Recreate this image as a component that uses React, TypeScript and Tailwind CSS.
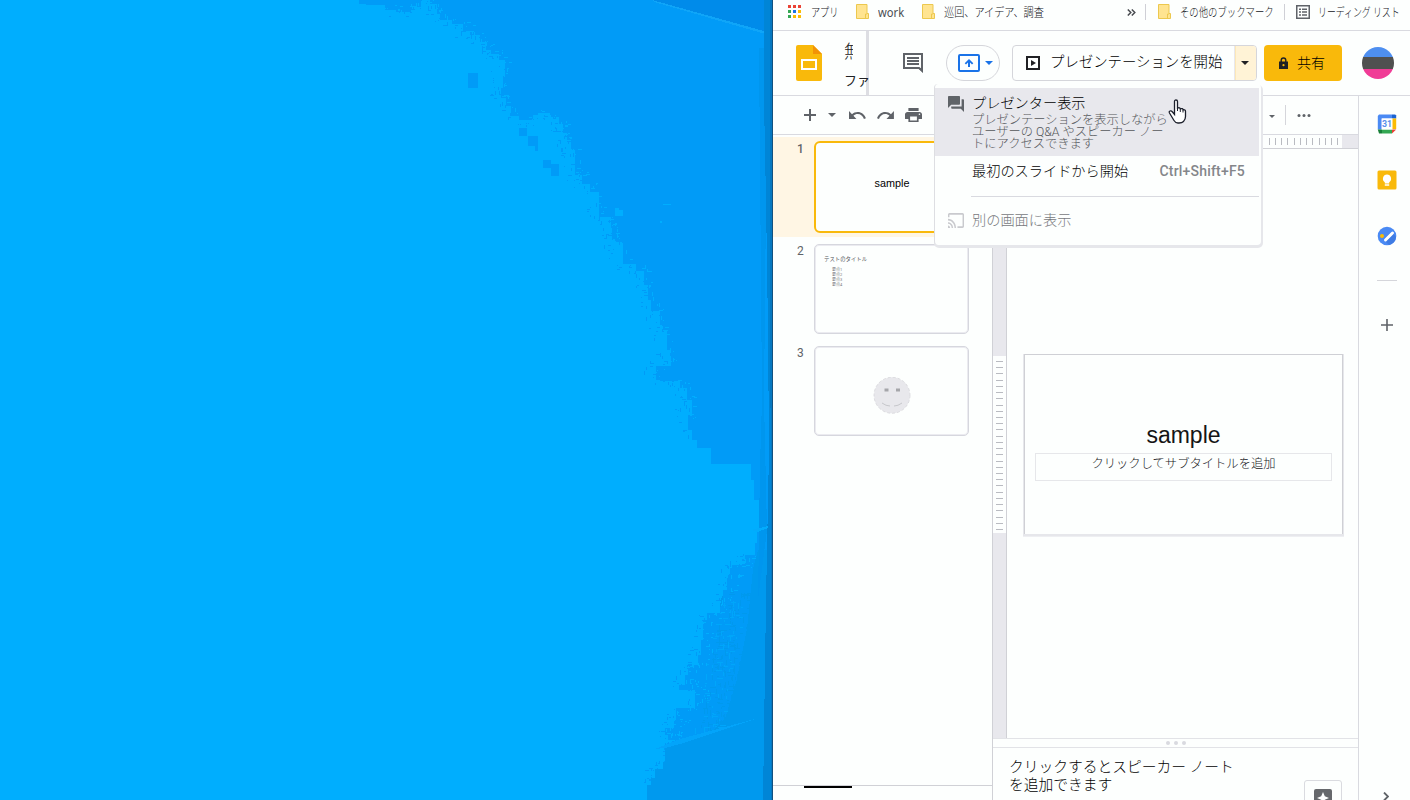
import React from "react";

const JP = "font-['Roboto','Noto_Sans_CJK_JP',sans-serif]";

type TProps = { w: string; s: string; children: React.ReactNode; className?: string };

/** Single-line label inside a box of known width. */
function Label({ w, s, children, className = "" }: TProps) {
  return (
    <span className={`block shrink-0 whitespace-nowrap ${w} ${className}`}>
      <span className={`inline-block origin-left ${s}`}>{children}</span>
    </span>
  );
}

/** Edge of the bright glow on the wallpaper, top to bottom. */
const EDGE: number[][] = [
  [359, 0], [366, 4], [385, 5], [396, 10], [411, 12], [412, 4], [421, 7], [430, 0], [437, 4], [440, 14], [452, 20],
  [463, 24], [470, 31], [480, 35], [486, 42], [491, 50], [499, 54], [505, 60], [503, 76], [501, 88], [506, 98],
  [511, 106], [519, 116], [532, 120], [538, 115], [550, 113], [559, 117], [563, 124], [567, 133], [571, 142],
  [575, 150], [575, 166], [582, 175], [590, 184], [599, 192], [599, 210], [611, 217], [612, 228], [616, 239],
  [623, 242], [623, 264], [636, 264], [644, 271], [648, 285], [651, 300], [660, 311], [662, 325], [667, 330],
  [671, 350], [671, 364], [656, 366], [660, 380], [680, 381], [687, 388], [692, 400], [688, 415], [692, 430],
  [697, 440], [711, 448], [711, 463], [751, 464], [754, 480], [759, 500], [762, 515], [769, 528], [757, 532],
  [755, 543], [745, 555], [742, 563], [730, 565], [727, 575], [723, 590], [720, 605], [707, 613], [703, 620],
  [701, 640], [698, 655], [688, 665], [685, 675], [679, 685], [695, 690], [695, 706], [676, 708], [674, 720],
  [665, 728], [668, 735], [672, 740], [667, 746], [665, 760], [663, 767], [655, 769], [651, 778], [647, 785], [647, 800],
];

function random(seed: number) {
  let a = seed;
  return () => {
    a = (a * 1664525 + 1013904223) % 4294967296;
    return a / 4294967296;
  };
}

const stepped = EDGE.map(([x, y], i) => (i === 0 ? `M${x} ${y}` : `V${y}H${x}`)).join("");

function speckle(from: number, to: number, seed: number, inner: number, outer: number, count: number) {
  const r = random(seed);
  let d = "";
  for (let i = from; i < to; i++) {
    const [x0, y0] = EDGE[i];
    const [x1, y1] = EDGE[i + 1];
    for (let k = 0; k < count; k++) {
      const t = r();
      const x = Math.round(x0 + (x1 - x0) * t - inner + r() * (inner + outer));
      const y = Math.round(y0 + (y1 - y0) * t + (r() - 0.5) * 12);
      const tall = r() > 0.5;
      const n = 1 + Math.floor(r() * 4);
      d += `M${x} ${y}h${tall ? 1 : n}v${tall ? n : 1}h${tall ? -1 : -n}z`;
    }
  }
  return d;
}

function scatter(seed: number, count: number, x: number, y: number, w: number, h: number, slant: number) {
  const r = random(seed);
  let d = "";
  for (let i = 0; i < count; i++) {
    const v = r();
    const px = Math.round(x + r() * w - v * slant);
    const py = Math.round(y + v * h);
    const n = 2 + Math.floor(r() * 5);
    d += r() > 0.5 ? `M${px} ${py}h1v${n}h-1z` : `M${px} ${py}h${n}v1h${-n}z`;
  }
  return d;
}

const darkSpecks = speckle(3, 56, 7, 15, 1, 6) + speckle(67, 92, 19, 8, 2, 5);
const lightSpecks = speckle(1, 56, 31, 2, 5, 4) + speckle(67, 92, 43, 2, 14, 8);
const glowScatter = scatter(5, 90, 718, 600, 28, 130, 24);
const deepScatter = scatter(11, 220, 722, 590, 38, 140, 24);

function Desktop() {
  return (
    <svg className="block h-[800px] w-[772px] shrink-0" viewBox="0 0 772 800" shapeRendering="crispEdges">
      <path d="M0 0H772V800H0Z" fill="#00aefe" />
      <path d={`${stepped}H772V0Z`} fill="#019bf7" />
      <path d={darkSpecks} fill="#019bf7" />
      <path d={lightSpecks} fill="#00aefe" />
      <path d="M468 73h10v15h-10zM519 128h8v8h-8zM528 136h10v15h-3v-5h-7zM543 160h8v4h8v12h-8v-8h-8z" fill="#019bf7" />
      <path d="M615 208h4v2h4v6h-8zM663 204h8v1h-8zM660 221h2v2h-2z" fill="#00aefe" />
      <path d="M758 550H772V800H647V785h4v-7h4v-9h8v-7h2v-15l45-14 15-14 12-40 10-50 6-60Z" fill="#0099ee" />
      <path d={deepScatter} fill="#0099ee" />
      <path d={glowScatter} fill="#00a6fa" />
      <path d="M655 749L680 739L710 731L755 719L710 734L680 744L665 748Z" fill="#03a4fa" />
      <path d="M652 0L768 33V0Z" fill="#008bea" />
      <path d="M652 0L771 33V35L762 33L654 2Z" fill="#0fa5f8" />
      <path d="M759 48H764L766 200L764 400L767 530L758 600L760 465L762 400Z" fill="#0096ee" />
      <path d="M764 0H772V800H763L766 600L769 450L768 330L766 200L764 100Z" fill="#0085d6" />
      <path d="M770 0H772V800H771Z" fill="#0678c0" />
      <path d="M751 530l17-4v2l-11 4z" fill="#03abfc" />
    </svg>
  );
}

function Folder() {
  return (
    <svg className="block h-[15px] w-[13px] shrink-0" viewBox="0 0 13 15">
      <path d="M.5.5h10.500v9h1.500v5H.5z" fill="#ffe490" stroke="#ecc84e" />
      <path d="M9.500 14V10h1.500" fill="none" stroke="#ecc84e" />
    </svg>
  );
}

function Bookmarks() {
  const colors = ["#ea4335", "#ea4335", "#ea4335", "#34a853", "#1a73e8", "#fbbc04", "#34a853", "#fbbc04", "#fbbc04"];
  return (
    <div className="flex h-[31px] items-start border-b border-[#d9dae0] pl-[15px] pt-[4px] font-['Noto_Sans','Noto_Sans_CJK_JP',sans-serif] text-[12px] font-light leading-[17px] text-[#111318]">
      <svg className="mt-[1px] h-[13px] w-[13px] shrink-0" viewBox="0 0 13 13">
        {colors.map((c, i) => (
          <rect key={i} x={(i % 3) * 5} y={Math.floor(i / 3) * 5} width="3" height="3" fill={c} />
        ))}
      </svg>
      <Label w="ml-[10px] w-[45px]" s="scale-x-[0.76]">アプリ</Label>
      <Folder />
      <Label w="ml-[9px] w-[44px]" s="scale-x-[0.93]"><span className="font-normal text-[#4a4d52]">work</span></Label>
      <Folder />
      <Label w="ml-[9px] w-[183px]" s="scale-x-[0.845]">巡回、アイデア、調査</Label>
      <svg className="mt-[5px] h-[7px] w-[9px] shrink-0" viewBox="0 0 9 7" fill="none" stroke="#4a4d52" strokeWidth="1.500">
        <path d="M.8.500l3 3-3 3M4.800.500l3 3-3 3" />
      </svg>
      <div className="ml-[9px] h-[16px] w-px bg-[#cfd0d6]" />
      <div className="ml-[12px]"><Folder /></div>
      <Label w="ml-[9px] w-[104px]" s="scale-x-[0.78]">その他のブックマーク</Label>
      <div className="h-[16px] w-px bg-[#cfd0d6]" />
      <svg className="ml-[11px] mt-px h-[14px] w-[14px] shrink-0" viewBox="0 0 14 14">
        <path d="M.75.750h12.500v12.500H.75z" fill="none" stroke="#5f6368" strokeWidth="1.500" />
        <path d="M3 3.500h2v1.500H3zM6 3.500h5v1.500H6zM3 6.300h2v1.500H3zM6 6.300h5v1.500H6zM3 9.200h2v1.500H3zM6 9.200h5v1.500H6z" fill="#5f6368" />
      </svg>
      <Label w="ml-[8px] w-[84px]" s="scale-x-[0.74]">リーディング リスト</Label>
    </div>
  );
}

function Header() {
  return (
    <div className="flex h-[65px] items-start border-b border-[#d9dae0]">
      <svg className="ml-[23px] mt-[14px] h-[36px] w-[26px] shrink-0" viewBox="0 0 26 36">
        <path d="M2 0h15l9 9v25a2 2 0 0 1-2 2H2a2 2 0 0 1-2-2V2a2 2 0 0 1 2-2z" fill="#f9b90b" />
        <path d="M17 0l9 9h-9z" fill="#f29307" />
        <path d="M6 15h14v9H6z" fill="none" stroke="#fff" strokeWidth="2" />
      </svg>
      <div className="ml-[22px] flex h-[64px] w-[25px] flex-col border-r-[3px] border-[#dddee3] text-[#202124]">
        <div className="mt-[11px] h-[20px] w-[9px] overflow-hidden whitespace-nowrap text-[18px] font-light leading-[20px] text-[#202124]">無</div>
        <div className="mt-[10px] whitespace-nowrap text-[13px] leading-[18px]">ファ</div>
      </div>
      <svg className="ml-[34px] mt-[22px] h-[20px] w-[20px] shrink-0" viewBox="0 0 20 20">
        <path d="M1 1h18v16.500L16 15H1z" fill="none" stroke="#5f6368" strokeWidth="2" />
        <path d="M15 15h5v5z" fill="#5f6368" />
        <path d="M4 4h12v2H4zM4 7h12v2H4zM4 10h12v2H4z" fill="#5f6368" />
      </svg>
      <div className="ml-[23px] mt-[14px] flex h-[36px] w-[54px] shrink-0 items-center rounded-full border border-[#d5d6db] pl-[11px]">
        <svg className="h-[18px] w-[22px]" viewBox="0 0 22 18">
          <rect x="1" y="1" width="20" height="16" rx="1" fill="none" stroke="#1a73e8" strokeWidth="2" />
          <path d="M10 13h2V8.500l2 2 1.300-1.300L11 5 6.700 9.200 8 10.500l2-2z" fill="#1a73e8" />
        </svg>
        <svg className="ml-[5px] h-[4px] w-[8px]" viewBox="0 0 8 4"><path d="M0 0h8L4 4z" fill="#1a73e8" /></svg>
      </div>
      <div className="ml-[12px] mt-[14px] flex h-[36px] w-[245px] shrink-0 overflow-hidden rounded-[4px] border border-[#d5d6db]">
        <div className="flex w-[222px] shrink-0 items-center border-r border-[#e8e8ec] pl-[13px]">
          <svg className="h-[14px] w-[14px] shrink-0" viewBox="0 0 14 14">
            <path d="M1 1h12v12H1z" fill="none" stroke="#202124" strokeWidth="2" />
            <path d="M5 4l5 3-5 3z" fill="#202124" />
          </svg>
          <span className="ml-[10px] whitespace-nowrap text-[14.400px] font-light leading-[20px] text-black">プレゼンテーションを開始</span>
        </div>
        <div className="flex w-[21px] shrink-0 items-center border-l border-[#fce8b8] bg-[#fff3d6] pl-[5px]">
          <svg className="h-[4px] w-[8px]" viewBox="0 0 8 4"><path d="M0 0h8L4 4z" fill="#202124" /></svg>
        </div>
      </div>
      <div className="ml-[7px] mt-[14px] flex h-[36px] w-[78px] shrink-0 items-center rounded-[4px] bg-[#f9b90b] pl-[15px]">
        <svg className="h-[12px] w-[9px]" viewBox="0 0 9 12">
          <path d="M2.200 5V3.300a2.300 2.300 0 0 1 4.600 0V5" fill="none" stroke="#202124" strokeWidth="1.400" />
          <path d="M0 4.500h9V12H0z" fill="#202124" />
          <circle cx="4.500" cy="8.200" r="1.100" fill="#f9b90b" />
        </svg>
        <span className="ml-[9px] whitespace-nowrap text-[14px] font-light leading-[20px] text-black">共有</span>
      </div>
      <div className="ml-[20px] mt-[16px] flex h-[32px] w-[32px] shrink-0 flex-col overflow-hidden rounded-full">
        <div className="h-[10px] bg-[#4e8ff0]" />
        <div className="h-[12px] bg-[#505050]" />
        <div className="h-[10px] bg-[#f03c96]" />
      </div>
    </div>
  );
}

function Toolbar() {
  return (
    <div className="flex h-[39px] items-center border-b border-[#d9dae0] pl-[31px]">
      <svg className="h-[12px] w-[12px] shrink-0" viewBox="0 0 12 12"><path d="M5 0h2v5h5v2H7v5H5V7H0V5h5z" fill="#5f6368" /></svg>
      <svg className="ml-[12px] h-[4px] w-[8px] shrink-0" viewBox="0 0 8 4"><path d="M0 0h8L4 4z" fill="#5f6368" /></svg>
      <svg className="ml-[12.500px] h-[8px] w-[17px] shrink-0" viewBox="2 7 20.600 9" preserveAspectRatio="none">
        <path d="M12.500 8c-2.650 0-5.050.99-6.900 2.600L2 7v9h9l-3.620-3.620c1.390-1.160 3.160-1.880 5.120-1.880 3.540 0 6.550 2.310 7.600 5.500l2.370-.78C21.080 11.030 17.150 8 12.500 8z" fill="#5f6368" />
      </svg>
      <svg className="ml-[11px] h-[8px] w-[17px] shrink-0" viewBox="1.500 7 20.600 9" preserveAspectRatio="none">
        <path d="M18.400 10.600C16.550 8.990 14.150 8 11.500 8c-4.650 0-8.580 3.030-9.960 7.220L3.900 16c1.050-3.190 4.050-5.500 7.600-5.500 1.950 0 3.730.72 5.120 1.880L13 16h9V7l-3.600 3.600z" fill="#5f6368" />
      </svg>
      <svg className="ml-[11px] h-[14px] w-[17px] shrink-0" viewBox="2 3 20 18" preserveAspectRatio="none">
        <path d="M19 8H5c-1.660 0-3 1.340-3 3v6h4v4h12v-4h4v-6c0-1.660-1.340-3-3-3zm-3 11H8v-5h8v5zm3-7c-.55 0-1-.45-1-1s.45-1 1-1 1 .45 1 1-.45 1-1 1zm-1-9H6v4h12V3z" fill="#5f6368" />
      </svg>
      <svg className="ml-[347.500px] mt-[2px] h-[3px] w-[6px] shrink-0" viewBox="0 0 6 3"><path d="M0 0h6L3 3z" fill="#5f6368" /></svg>
      <div className="ml-[10px] h-[20px] w-px bg-[#d5d6db]" />
      <svg className="ml-[11px] h-[3px] w-[14px] shrink-0" viewBox="0 0 14 3" fill="#5f6368">
        <circle cx="2" cy="1.500" r="1.500" /><circle cx="7" cy="1.500" r="1.500" /><circle cx="12" cy="1.500" r="1.500" />
      </svg>
    </div>
  );
}

function Filmstrip() {
  return (
    <div className="flex w-[220px] shrink-0 flex-col border-r border-[#d0d1d6] text-[12px] leading-[14px] text-[#5f6368]">
      <div className="mt-[2px] flex h-[100px] bg-[#fff6e4] pt-[4px]">
        <div className="w-[41px] pl-[24px] pt-px font-medium">1</div>
        <div className="h-[92px] w-[156px] rounded-[6px] border-2 border-[#f9b90b] bg-[#fdfffe] pt-[33px] text-center font-['Liberation_Sans',sans-serif] text-[10.800px] text-black">sample</div>
      </div>
      <div className="mt-[7px] flex">
        <div className="w-[41px] pl-[24px]">2</div>
        <div className="h-[90px] w-[155px] rounded-[5px] border border-[#d6d7de] pl-[9px] pt-[10px] text-[#77797d] shadow-[inset_0_0_0_1px_#ebebf0]">
          <div className="h-[13px] w-[60px] whitespace-nowrap text-[5.400px] leading-[8px] text-[#55575b]">テストのタイトル</div>
          {["要点1", "要点2", "要点3", "要点4"].map((t) => (
            <div key={t} className="ml-[8px] h-[5px] w-[60px]">
              <span className="block -translate-y-px whitespace-nowrap text-[4px] leading-[5px]">{t}</span>
            </div>
          ))}
        </div>
      </div>
      <div className="mt-[12px] flex">
        <div className="w-[41px] pl-[24px]">3</div>
        <div className="flex h-[90px] w-[155px] justify-center rounded-[5px] border border-[#d6d7de] pt-[30px] shadow-[inset_0_0_0_1px_#ebebf0]">
          <svg className="h-[37px] w-[38px]" viewBox="0 0 38 37">
            <circle cx="19" cy="18.300" r="18" fill="#e8e8ec" stroke="#d2d3d7" strokeWidth=".7" strokeDasharray="3 2" />
            <path d="M11.500 11.500h4v3h-4zM23 11.500h4v3h-4z" fill="#a5a6aa" />
            <path d="M9 26q4 3 8 3M21 29q4 0 8-3" fill="none" stroke="#c6c7cb" />
          </svg>
        </div>
      </div>
      <div className="mt-auto h-[15px] border-t border-[#d0d1d6] pl-[31px]">
        <div className="h-[2px] w-[48px] bg-black" />
      </div>
    </div>
  );
}

function Canvas() {
  return (
    <div className="flex w-[365px] shrink-0 flex-col">
      <div className="flex h-[14px] shrink-0 border-b border-[#d0d1d6] bg-[#e8e8ed]">
        <svg className="ml-[30px] block h-[13px] w-[319px] bg-[#fdfffe]" viewBox="0 0 319 13" shapeRendering="crispEdges">
          {Array.from({ length: 51 }, (_, i) => (
            <rect key={i} x={Math.round(1.9 + i * 6.25)} y="3" width="1" height="7" fill="#b9bbc1" />
          ))}
        </svg>
      </div>
      <div className="flex h-[589px] shrink-0">
        <div className="w-[14px] border-r border-[#d0d1d6] bg-[#e8e8ed] pt-[207px]">
          <svg className="block h-[177px] w-[13px] bg-[#fdfffe]" viewBox="0 0 13 177" shapeRendering="crispEdges">
            {Array.from({ length: 28 }, (_, i) => (
              <rect key={i} x="3" y={Math.round(5 + i * 6.22)} width="7" height="1" fill="#b9bbc1" />
            ))}
          </svg>
        </div>
        <div className="pl-[17px] pt-[205px]">
          <div className="flex h-[180px] w-[319px] flex-col items-center border border-b-0 border-[#cfd0d5] pt-[64px] shadow-[0_1px_0_1px_#e6e7eb,0_2px_0_1px_#eeeff2]">
            <div className="font-['Liberation_Sans',sans-serif] text-[23px] leading-[32px] text-[#151515]">sample</div>
            <div className="mt-[2px] h-[28px] w-[297px] border border-[#e6e7ea] pt-[2px] text-center text-[12.300px] font-light leading-[16px] text-[#202124]">クリックしてサブタイトルを追加</div>
          </div>
        </div>
      </div>
      <div className="flex h-[10px] shrink-0 items-center justify-center gap-[4px] border-y border-[#e2e3e7]">
        <i className="block h-[4px] w-[4px] rounded-full bg-[#d9dae0]" />
        <i className="block h-[4px] w-[4px] rounded-full bg-[#d9dae0]" />
        <i className="block h-[4px] w-[4px] rounded-full bg-[#d9dae0]" />
      </div>
      <div className="flex pl-[16px] pt-[9px]">
        <div className="w-[295px] pt-px text-[14.750px] font-light leading-[18px] text-black">
          クリックするとスピーカー ノート<br />を追加できます
        </div>
        <div className="mt-[23px] h-[30px] w-[38px] shrink-0 rounded-[3px] border border-[#dadbe0] pl-[9px] pt-[8px]">
          <svg className="block h-[18px] w-[18px]" viewBox="0 0 18 18">
            <rect width="18" height="18" rx="2" fill="#66686c" />
            <path d="M9 3l1.800 4.200L15 9l-4.200 1.800L9 15l-1.800-4.200L3 9l4.200-1.800z" fill="#fff" />
          </svg>
        </div>
      </div>
    </div>
  );
}

function SidePanel() {
  return (
    <div className="flex w-[52px] shrink-0 flex-col items-center border-l border-[#d9dae0] pl-[4px] pt-[18px]">
      <svg className="h-[20px] w-[20px] shrink-0" viewBox="0 0 20 20">
        <path d="M2 .5h13v4H5v11H.8V2z" fill="#4a8af4" />
        <path d="M15 .5h3.200l1 1v3H15z" fill="#1a62d2" />
        <path d="M15 4.500h4.200V15H15z" fill="#fbbc04" />
        <path d="M5 15.500h10v4H5z" fill="#34a853" />
        <path d="M.8 15.500H5v4H2z" fill="#188038" />
        <path d="M15 15.500h4.200l-4.200 4z" fill="#ea4335" />
        <path d="M4.500 4.500h11v11h-11z" fill="#fff" />
        <text x="10" y="13.200" textAnchor="middle" fontFamily="Roboto" fontWeight="700" fontSize="8.800" fill="#5a90ea">31</text>
      </svg>
      <svg className="mt-[36px] h-[20px] w-[20px] shrink-0" viewBox="0 0 20 20">
        <rect x=".500" y=".500" width="19" height="19" rx="1.500" fill="#f9b90b" />
        <path d="M10 4.500a4.200 4.200 0 0 0-2.200 7.700V13.500h4.400v-1.300A4.200 4.200 0 0 0 10 4.500zM7.800 14.300h4.400v1.400H7.800z" fill="#fff" />
      </svg>
      <svg className="mt-[36px] h-[20px] w-[20px] shrink-0" viewBox="0 0 20 20">
        <circle cx="10" cy="10" r="9.300" fill="#4a8af4" />
        <path d="M8 15l8-8 3 4a9 9 0 0 1-7 8z" fill="#3f7ce4" />
        <path d="M8.500 14L15.500 7" stroke="#fff" strokeWidth="3" strokeLinecap="round" />
        <circle cx="5" cy="10" r="2" fill="#fbbc04" />
      </svg>
      <div className="mt-[34px] h-px w-[20px] shrink-0 bg-[#d5d6db]" />
      <svg className="mt-[38px] h-[12px] w-[12px] shrink-0" viewBox="0 0 12 12"><path d="M5.200 0h1.600v5.200H12v1.600H6.800V12H5.200V6.800H0V5.200h5.200z" fill="#5f6368" /></svg>
      <svg className="mr-[2px] mt-[461px] h-[9px] w-[6px] shrink-0" viewBox="0 0 6 9" fill="none" stroke="#5f6368" strokeWidth="1.800"><path d="M1 .500l4 4-4 4" /></svg>
    </div>
  );
}

function PresentMenu() {
  return (
    <div className="absolute left-[934px] top-[84px] h-[161px] w-[327px] rounded-[4px] border-l border-[#dddee2] bg-[#fdfffe] pt-[4px] shadow-[1px_2px_0_1px_#e6e7eb]">
      <div className="flex h-[68px] w-[324px] bg-[#e8e8ed] pl-[13px] pt-[6px]">
        <svg className="mt-[2px] h-[16px] w-[16px] shrink-0" viewBox="2 2 20 20">
          <path d="M21 6h-2v9H6v2c0 .55.45 1 1 1h11l4 4V7c0-.55-.45-1-1-1zm-4 6V3c0-.55-.45-1-1-1H3c-.55 0-1 .45-1 1v14l4-4h10c.55 0 1-.45 1-1z" fill="#5f6368" />
        </svg>
        <div className="ml-[8px] whitespace-nowrap font-light">
          <div className="h-[20px] text-[14.200px] leading-[18px] text-black">プレゼンター表示</div>
          <div className="text-[12.250px] leading-[12px] text-[#55575b]">
            プレゼンテーションを表示しながら<br />ユーザーの Q&amp;A やスピーカー ノー<br />トにアクセスできます
          </div>
        </div>
      </div>
      <div className="flex h-[40px] items-start justify-between pl-[37px] pr-[16px] pt-[6px] text-[14.200px] font-light leading-[18px] text-black">
        <span>最初のスライドから開始</span>
        <span className="text-[14px] font-medium tracking-[0.2px] text-[#84868a]">Ctrl+Shift+F5</span>
      </div>
      <div className="ml-[36px] h-px w-[288px] bg-[#d9dae0]" />
      <div className="flex items-start pl-[13px] pt-[14px]">
        <svg className="mt-[2px] h-[15px] w-[16px]" viewBox="1 3 22 18" preserveAspectRatio="none">
          <path d="M21 3H3c-1.100 0-2 .9-2 2v3h2V5h18v14h-7v2h7c1.100 0 2-.9 2-2V5c0-1.100-.9-2-2-2zM1 18v3h3c0-1.660-1.340-3-3-3zm0-4v2c2.760 0 5 2.240 5 5h2c0-3.870-3.130-7-7-7zm0-4v2c4.970 0 9 4.030 9 9h2c0-6.080-4.930-11-11-11z" fill="#c9cace" />
        </svg>
        <span className="ml-[8px] text-[14.200px] font-light leading-[18px] text-[#77797d]">別の画面に表示</span>
      </div>
    </div>
  );
}

export default function App() {
  return (
    <div className={`relative flex h-[800px] w-[1410px] overflow-hidden bg-[#fdfffe] ${JP}`}>
      <Desktop />
      <div className="flex w-[638px] shrink-0 flex-col border-l border-[#12517f]">
        <Bookmarks />
        <Header />
        <div className="flex h-[704px]">
          <div className="flex w-[585px] shrink-0 flex-col">
            <Toolbar />
            <div className="flex h-[665px]">
              <Filmstrip />
              <Canvas />
            </div>
          </div>
          <SidePanel />
        </div>
      </div>
      <PresentMenu />
      <svg className="absolute left-[1168px] top-[99px] h-[26px] w-[19px]" viewBox="0 0 19 26">
        <path
          d="M6.500 2.500q0-1.500 1.500-1.500t1.500 1.500V9q2.500-.8 2.800.8 2.500-.7 2.800 1 2.400-.4 2.400 1.700v5q0 3-2 5-1.500 1.500-4.500 1.500H10q-2.500 0-4-2.500L1.500 14q-.8-1.500.5-2t2.500 1l2 2.500z"
          fill="#fff"
          stroke="#1c1f2b"
          strokeWidth="1.300"
        />
        <path d="M9.500 9v3M12.300 10v3M15 11v2.500" stroke="#1c1f2b" strokeWidth="1" />
      </svg>
    </div>
  );
}
